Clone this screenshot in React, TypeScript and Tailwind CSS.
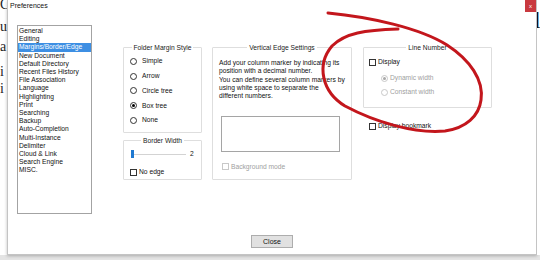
const categories = [
  'General',
  'Editing',
  'Margins/Border/Edge',
  'New Document',
  'Default Directory',
  'Recent Files History',
  'File Association',
  'Language',
  'Highlighting',
  'Print',
  'Searching',
  'Backup',
  'Auto-Completion',
  'Multi-Instance',
  'Delimiter',
  'Cloud & Link',
  'Search Engine',
  'MISC.',
];

const Radio = ({ checked = false, disabled = false }: { checked?: boolean; disabled?: boolean }) => (
  <span
    className={`w-[7px] h-[7px] rounded-full border bg-white flex items-center justify-center shrink-0 ${
      disabled ? 'border-[#c8c8c8]' : 'border-[#333]'
    }`}
  >
    {checked && <span className={`w-[3px] h-[3px] rounded-full ${disabled ? 'bg-[#a8a8a8]' : 'bg-black'}`} />}
  </span>
);

const Check = ({ disabled = false }: { disabled?: boolean }) => (
  <span className={`w-[7px] h-[7px] border bg-white shrink-0 ${disabled ? 'border-[#c8c8c8]' : 'border-[#333]'}`} />
);

const Group = ({ title, className, children }: { title: string; className: string; children?: React.ReactNode }) => (
  <div className={`relative border border-[#dedede] rounded-[1px] ${className}`}>
    <div className="absolute left-0 right-0 -top-[4.5px] flex justify-center">
      <span className="bg-white px-[2px] leading-[8px] text-[#222]">{title}</span>
    </div>
    {children}
  </div>
);

export default function App() {
  return (
    <div className="relative w-[540px] h-[260px] overflow-hidden bg-[#e4e4e4] font-['Liberation_Sans',Arial,sans-serif] text-black">
      <div className="flex h-[255px]">
        {/* editor behind the dialog */}
        <div className="w-[7px] bg-white overflow-hidden flex flex-col font-['Liberation_Serif',serif] text-[14px] leading-[14px] text-[#222]">
          <span className="-mt-[2px] h-[14px]">C</span>
          <span className="mt-[8px] h-[14px]">u</span>
          <span className="mt-[5.5px] h-[14px]">a</span>
          <span className="mt-[11px] h-[14px]">i</span>
          <span className="mt-[3px] h-[14px]">i</span>
        </div>

        {/* dialog */}
        <div className="w-[530px] h-[255px] bg-white border border-t-0 border-[#c4c4c4] shadow-[0_1px_3px_rgba(0,0,0,0.25)] flex flex-col">
          <div className="h-[13px] flex justify-between">
            <span className="pl-[2px] text-[7px] leading-[12px] text-[#111]">Preferences</span>
            <div className="w-[11px] h-[12px] bg-[#c9393f] flex items-center justify-center text-white text-[6px] leading-none">x</div>
          </div>

          <div className="flex flex-col text-[6.7px]">
            <div className="flex items-start pl-[9px] pt-[12px]">
              {/* category list */}
              <div className="w-[75px] h-[189px] border border-[#a3a3a3] pt-[1px] leading-[8.2px] text-[#111]">
                {categories.map((c) => (
                  <div key={c} className={`px-[1px] whitespace-nowrap ${c === 'Margins/Border/Edge' ? 'bg-[#3d8fe3] text-white' : ''}`}>
                    {c}
                  </div>
                ))}
              </div>

              {/* folder margin + border width */}
              <div className="ml-[31px] mt-[22px] w-[79px] flex flex-col gap-[7px]">
                <Group title="Folder Margin Style" className="h-[86px] pt-[6px] pl-[6px]">
                  {[
                    ['Simple', false],
                    ['Arrow', false],
                    ['Circle tree', false],
                    ['Box tree', true],
                    ['None', false],
                  ].map(([label, on]) => (
                    <div key={label as string} className="h-[14.75px] flex items-center gap-[5px] text-[#111]">
                      <Radio checked={on as boolean} />
                      <span>{label as string}</span>
                    </div>
                  ))}
                </Group>

                <Group title="Border Width" className="h-[40px] pt-[9px] pl-[6px]">
                  <div className="h-[8px] flex items-center pl-[1px]">
                    <div className="relative w-[55px] h-[1px] bg-[#d3d3d3]">
                      <span className="absolute left-0 -top-[3.5px] w-[3px] h-[8px] bg-[#1f79d1]" />
                    </div>
                    <span className="ml-[4px] text-[#111]">2</span>
                  </div>
                  <div className="mt-[10px] h-[8px] flex items-center gap-[2px] text-[#111]">
                    <Check />
                    <span>No edge</span>
                  </div>
                </Group>
              </div>

              {/* vertical edge */}
              <Group title="Vertical Edge Settings" className="ml-[10px] mt-[22px] w-[140px] h-[133px] pt-[11px] pl-[6px]">
                <div className="leading-[8.3px] text-[#111]">
                  Add your column marker by indicating its
                  <br />
                  position with a decimal number.
                  <br />
                  You can define several column markers by
                  <br />
                  using white space to separate the
                  <br />
                  different numbers.
                </div>
                <div className="ml-[2px] mt-[16px] w-[119px] h-[36px] border border-[#a5a5a5] bg-white" />
                <div className="ml-[3px] mt-[10.5px] h-[8px] flex items-center gap-[2px] text-[#a0a0a0]">
                  <Check disabled />
                  <span>Background mode</span>
                </div>
              </Group>

              {/* line number */}
              <div className="ml-[11px] mt-[22px] flex flex-col">
                <Group title="Line Number" className="w-[129px] h-[61px] pt-[10px] pl-[5px]">
                  <div className="h-[8px] flex items-center gap-[2px] text-[#111]">
                    <Check />
                    <span>Display</span>
                  </div>
                  <div className="ml-[12px] mt-[8px] h-[8px] flex items-center gap-[2px] text-[#a0a0a0]">
                    <Radio checked disabled />
                    <span>Dynamic width</span>
                  </div>
                  <div className="ml-[12px] mt-[6px] h-[8px] flex items-center gap-[2px] text-[#a0a0a0]">
                    <Radio disabled />
                    <span>Constant width</span>
                  </div>
                </Group>
                <div className="mt-[14px] pl-[6px] h-[8px] flex items-center gap-[2px] text-[#111]">
                  <Check />
                  <span>Display bookmark</span>
                </div>
              </div>
            </div>

            <button className="self-center mt-[21px] w-[42px] h-[13px] bg-[#e1e1e1] border border-[#adadad] text-[7px] leading-none text-[#111]">
              Close
            </button>
          </div>
        </div>

        <div className="w-[3px] bg-white overflow-hidden font-['Liberation_Serif',serif] text-[24px] leading-[24px] text-[#111]">
          <span className="block -ml-[3px] mt-[8px]">l</span>
        </div>
      </div>

      {/* red marker circle drawn over the screenshot */}
      <svg className="absolute inset-0 pointer-events-none" width="540" height="260" viewBox="0 0 540 260">
        <path
          d="M328,13 C370,17 420,28 447,45 C470,60 484,80 481,100 C479,116 466,128 445,131 C415,134 375,122 345,106 C322,92 316,65 332,46 C345,33 365,30 398,29"
          fill="none"
          stroke="#c3161c"
          strokeWidth="3"
          strokeLinecap="round"
        />
      </svg>
    </div>
  );
}
